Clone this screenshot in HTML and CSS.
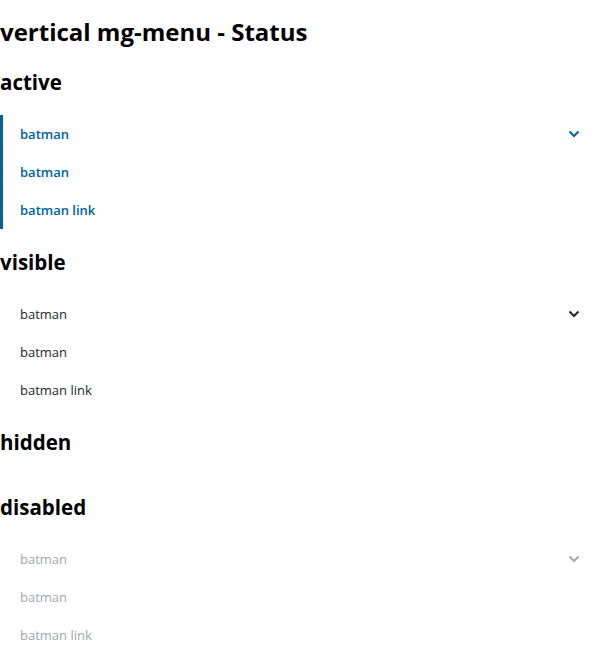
FILE: index.html
```html
<!DOCTYPE html>
<html>
<head>
<meta charset="utf-8">
<link rel="stylesheet" href="styles.css">
</head>
<body>
<h1 class="title">vertical mg-menu - Status</h1>

<h2 class="section">active</h2>
<ul class="menu menu--active">
  <li class="item"><span>batman</span><svg class="chev" viewBox="0 0 12 8" width="12" height="8"><polyline points="1.5,1.5 6,6 10.5,1.5" fill="none" stroke="currentColor" stroke-width="2"/></svg></li>
  <li class="item"><span>batman</span></li>
  <li class="item"><span>batman link</span></li>
</ul>

<h2 class="section">visible</h2>
<ul class="menu menu--visible">
  <li class="item"><span>batman</span><svg class="chev" viewBox="0 0 12 8" width="12" height="8"><polyline points="1.5,1.5 6,6 10.5,1.5" fill="none" stroke="currentColor" stroke-width="2"/></svg></li>
  <li class="item"><span>batman</span></li>
  <li class="item"><span>batman link</span></li>
</ul>

<h2 class="section section--hidden">hidden</h2>

<h2 class="section">disabled</h2>
<ul class="menu menu--disabled">
  <li class="item"><span>batman</span><svg class="chev" viewBox="0 0 12 8" width="12" height="8"><polyline points="1.5,1.5 6,6 10.5,1.5" fill="none" stroke="currentColor" stroke-width="2"/></svg></li>
  <li class="item"><span>batman</span></li>
  <li class="item"><span>batman link</span></li>
</ul>
</body>
</html>
```

FILE: styles.css
```css
html, body {
  margin: 0;
  padding: 0;
  background: #fff;
}
body {
  font-family: "Open Sans", "Noto Sans", sans-serif;
  color: #000;
}
.title {
  font-size: 24px;
  font-weight: 700;
  line-height: 1.36;
  margin: 16px 0;
}
.section {
  font-size: 20.5px;
  font-weight: 700;
  line-height: 30px;
  margin: 18px 0;
}
.section--hidden {
  margin-bottom: 35px;
}
.menu {
  list-style: none;
  margin: 0;
  padding: 0;
}
.item {
  display: flex;
  align-items: center;
  justify-content: space-between;
  height: 38px;
  padding: 0 20px;
  font-size: 13px;
}
.chev {
  display: block;
}
.menu--active {
  border-left: 3px solid #0063a3;
  color: #0063a3;
  font-weight: 600;
}
.menu--active .item {
  padding-left: 17px;
}
.menu--visible {
  color: #1c2830;
}
.menu--disabled {
  color: #a3a7aa;
}
```
